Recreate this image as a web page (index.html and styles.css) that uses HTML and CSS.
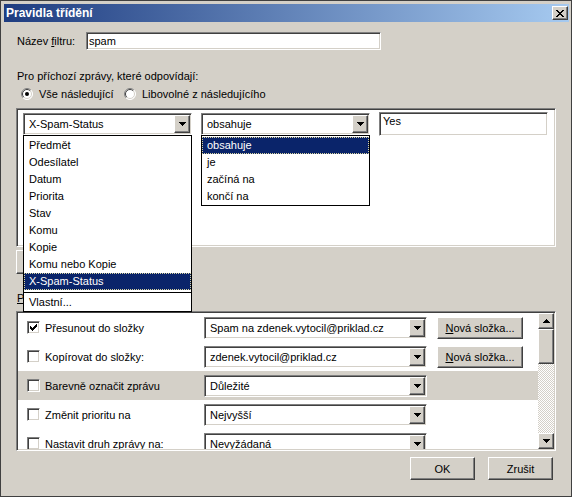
FILE: index.html
```html
<!DOCTYPE html>
<html lang="cs">
  <head>
    <meta charset="UTF-8" />
    <meta name="viewport" content="width=device-width, initial-scale=1.0" />
    <title>Pravidla třídění</title>
    <link rel="stylesheet" href="styles.css">
  </head>
  <body>
    <div class="window">
      <div class="title-bar">
        <span class="title-text">Pravidla třídění</span>
        <div class="close-button raised">
          <svg width="8" height="7" viewBox="0 0 8 7"><path fill="#000" d="M0 0h2v1H0zM6 0h2v1H6zM1 1h2v1H1zM5 1h2v1H5zM2 2h4v1H2zM3 3h2v1H3zM2 4h4v1H2zM1 5h2v1H1zM5 5h2v1H5zM0 6h2v1H0zM6 6h2v1H6z"/></svg>
        </div>
      </div>

      <div class="dialog-body">
        <div class="filter-row">
          <label class="filter-label" for="filter-name">Název <u>f</u>iltru:</label>
          <input type="text" id="filter-name" class="text-field sunken filter-input" value="spam" />
        </div>

        <div class="intro">Pro příchozí zprávy, které odpovídají:</div>

        <div class="radio-row">
          <div class="radio radio-first">
            <svg width="12" height="12" viewBox="0 0 12 12">
              <circle cx="6" cy="6" r="5.5" fill="#fff"/>
              <path d="M2.1 9.9A5.5 5.5 0 0 1 9.9 2.1" fill="none" stroke="#808080"/>
              <path d="M9.9 2.1A5.5 5.5 0 0 1 2.1 9.9" fill="none" stroke="#fff"/>
              <path d="M2.8 9.2A4.5 4.5 0 0 1 9.2 2.8" fill="none" stroke="#404040"/>
              <path d="M9.2 2.8A4.5 4.5 0 0 1 2.8 9.2" fill="none" stroke="#d4d0c8"/>
              <circle cx="6" cy="6" r="2" fill="#000"/>
            </svg>
            <span>Vše následující</span>
          </div>
          <div class="radio">
            <svg width="12" height="12" viewBox="0 0 12 12">
              <circle cx="6" cy="6" r="5.5" fill="#fff"/>
              <path d="M2.1 9.9A5.5 5.5 0 0 1 9.9 2.1" fill="none" stroke="#808080"/>
              <path d="M9.9 2.1A5.5 5.5 0 0 1 2.1 9.9" fill="none" stroke="#fff"/>
              <path d="M2.8 9.2A4.5 4.5 0 0 1 9.2 2.8" fill="none" stroke="#404040"/>
              <path d="M9.2 2.8A4.5 4.5 0 0 1 2.8 9.2" fill="none" stroke="#d4d0c8"/>
            </svg>
            <span>Libovolné z následujícího</span>
          </div>
        </div>

        <div class="conditions sunken">
          <div class="condition-row">
            <div class="field">
              <div class="combo sunken">
                <span class="combo-text">X-Spam-Status</span>
                <span class="combo-button raised">
                  <svg width="7" height="4" viewBox="0 0 7 4"><path fill="#000" d="M0 0h7v1H0zM1 1h5v1H1zM2 2h3v1H2zM3 3h1v1H3z"/></svg>
                </span>
              </div>
              <div class="dropdown">
                <div class="dropdown-item">Předmět</div>
                <div class="dropdown-item">Odesílatel</div>
                <div class="dropdown-item">Datum</div>
                <div class="dropdown-item">Priorita</div>
                <div class="dropdown-item">Stav</div>
                <div class="dropdown-item">Komu</div>
                <div class="dropdown-item">Kopie</div>
                <div class="dropdown-item">Komu nebo Kopie</div>
                <div class="dropdown-item selected">X-Spam-Status</div>
                <div class="dropdown-sep"></div>
                <div class="dropdown-item">Vlastní...</div>
              </div>
            </div>

            <div class="field">
              <div class="combo sunken">
                <span class="combo-text">obsahuje</span>
                <span class="combo-button raised">
                  <svg width="7" height="4" viewBox="0 0 7 4"><path fill="#000" d="M0 0h7v1H0zM1 1h5v1H1zM2 2h3v1H2zM3 3h1v1H3z"/></svg>
                </span>
              </div>
              <div class="dropdown">
                <div class="dropdown-item selected">obsahuje</div>
                <div class="dropdown-item">je</div>
                <div class="dropdown-item">začíná na</div>
                <div class="dropdown-item">končí na</div>
              </div>
            </div>

            <input type="text" class="text-field sunken value-input" value="Yes" />
          </div>
        </div>

        <!-- button hidden under the open list -->
        <div class="add-row">
          <div class="push-button raised"></div>
        </div>

        <div class="actions-label"><u>P</u>rovést tyto akce:</div>

        <div class="actions sunken">
          <div class="action-rows">
            <div class="action-row">
              <span class="checkbox sunken">
                <svg width="7" height="7" viewBox="0 0 7 7"><path fill="#000" d="M6 0h1v1H6zM5 1h2v1H5zM0 2h1v1H0zM4 2h3v1H4zM0 3h2v1H0zM3 3h3v1H3zM0 4h5v1H0zM1 5h3v1H1zM2 6h1v1H2z"/></svg>
              </span>
              <span class="action-label">Přesunout do složky</span>
              <div class="combo sunken action-combo">
                <span class="combo-text">Spam na zdenek.vytocil@priklad.cz</span>
                <span class="combo-button raised">
                  <svg width="7" height="4" viewBox="0 0 7 4"><path fill="#000" d="M0 0h7v1H0zM1 1h5v1H1zM2 2h3v1H2zM3 3h1v1H3z"/></svg>
                </span>
              </div>
              <div class="push-button raised folder-button"><u>N</u>ová složka...</div>
            </div>

            <div class="action-row">
              <span class="checkbox sunken"></span>
              <span class="action-label">Kopírovat do složky:</span>
              <div class="combo sunken action-combo">
                <span class="combo-text">zdenek.vytocil@priklad.cz</span>
                <span class="combo-button raised">
                  <svg width="7" height="4" viewBox="0 0 7 4"><path fill="#000" d="M0 0h7v1H0zM1 1h5v1H1zM2 2h3v1H2zM3 3h1v1H3z"/></svg>
                </span>
              </div>
              <div class="push-button raised folder-button"><u>N</u>ová složka...</div>
            </div>

            <div class="action-row current">
              <span class="checkbox sunken"></span>
              <span class="action-label">Barevně označit zprávu</span>
              <div class="combo sunken action-combo">
                <span class="combo-text">Důležité</span>
                <span class="combo-button raised">
                  <svg width="7" height="4" viewBox="0 0 7 4"><path fill="#000" d="M0 0h7v1H0zM1 1h5v1H1zM2 2h3v1H2zM3 3h1v1H3z"/></svg>
                </span>
              </div>
            </div>

            <div class="action-row">
              <span class="checkbox sunken"></span>
              <span class="action-label">Změnit prioritu na</span>
              <div class="combo sunken action-combo">
                <span class="combo-text">Nejvyšší</span>
                <span class="combo-button raised">
                  <svg width="7" height="4" viewBox="0 0 7 4"><path fill="#000" d="M0 0h7v1H0zM1 1h5v1H1zM2 2h3v1H2zM3 3h1v1H3z"/></svg>
                </span>
              </div>
            </div>

            <div class="action-row">
              <span class="checkbox sunken"></span>
              <span class="action-label">Nastavit druh zprávy na:</span>
              <div class="combo sunken action-combo">
                <span class="combo-text">Nevyžádaná</span>
                <span class="combo-button raised">
                  <svg width="7" height="4" viewBox="0 0 7 4"><path fill="#000" d="M0 0h7v1H0zM1 1h5v1H1zM2 2h3v1H2zM3 3h1v1H3z"/></svg>
                </span>
              </div>
            </div>
          </div>

          <div class="scrollbar">
            <span class="scroll-button raised">
              <svg width="7" height="4" viewBox="0 0 7 4"><path fill="#000" d="M3 0h1v1H3zM2 1h3v1H2zM1 2h5v1H1zM0 3h7v1H0z"/></svg>
            </span>
            <span class="scroll-thumb raised"></span>
            <span class="scroll-track"></span>
            <span class="scroll-button raised">
              <svg width="7" height="4" viewBox="0 0 7 4"><path fill="#000" d="M0 0h7v1H0zM1 1h5v1H1zM2 2h3v1H2zM3 3h1v1H3z"/></svg>
            </span>
          </div>
        </div>

        <div class="dialog-buttons">
          <div class="push-button raised dialog-button">OK</div>
          <div class="push-button raised dialog-button">Zrušit</div>
        </div>
      </div>
    </div>
  </body>
</html>
```

FILE: styles.css
```css
* {
  box-sizing: border-box;
}

body {
  margin: 0;
  background: #fff;
  font-family: "Liberation Sans", Arial, sans-serif;
  font-size: 11px;
  color: #000;
}

u {
  text-decoration: underline;
  text-underline-offset: 1px;
}

/* classic 3d frames */
.raised {
  background: #d4d0c8;
  border: 1px solid;
  border-color: #fff #404040 #404040 #fff;
  box-shadow: inset -1px -1px #808080, inset 1px 1px #d4d0c8;
}

.sunken {
  background: #fff;
  border: 1px solid;
  border-color: #808080 #fff #fff #808080;
  box-shadow: inset 1px 1px #404040, inset -1px -1px #d4d0c8;
}

.window {
  width: 572px;
  height: 497px;
  background: #d4d0c8;
  border: 1px solid #404040;
  padding: 3px 2px 3px 3px;
  display: flex;
  flex-direction: column;
}

.title-bar {
  flex: none;
  height: 18px;
  display: flex;
  align-items: center;
  justify-content: space-between;
  padding: 0 1px 0 2px;
  background: linear-gradient(to right, #1e3c80, #a6caf0);
  color: #fff;
  font-weight: bold;
  font-size: 12px;
}

.close-button {
  width: 16px;
  height: 14px;
  display: flex;
  align-items: center;
  justify-content: center;
}

.dialog-body {
  flex: 1;
  padding: 0 13px 0 12px;
  display: flex;
  flex-direction: column;
}

.filter-row {
  margin-top: 10px;
  display: flex;
  align-items: center;
}

.filter-label {
  width: 69px;
  margin-left: 1px;
}

.text-field {
  font: inherit;
  color: #000;
  outline: none;
  margin: 0;
  padding: 0 2px;
}

.filter-input {
  width: 295px;
  height: 18px;
}

.intro {
  margin: 20px 0 0 1px;
  line-height: 13px;
}

.radio-row {
  margin-top: 4px;
  height: 14px;
  padding-left: 5px;
  display: flex;
  align-items: center;
}

.radio {
  display: flex;
  align-items: center;
  gap: 6px;
}

.radio-first {
  width: 103px;
}

.conditions {
  margin-top: 7px;
  height: 139px;
  padding: 3px 6px;
}

.condition-row {
  display: flex;
  align-items: center;
  gap: 9px;
}

.field {
  position: relative;
  width: 169px;
}

.combo {
  height: 22px;
  padding: 1px;
  display: flex;
  align-items: center;
}

.combo-text {
  flex: 1;
  padding-left: 4px;
  white-space: nowrap;
  overflow: hidden;
}

.combo-button {
  flex: none;
  width: 16px;
  height: 18px;
  display: flex;
  align-items: center;
  justify-content: center;
}

.value-input {
  width: 169px;
  height: 24px;
  padding: 0 3px 6px;
}

.dropdown {
  position: absolute;
  top: 100%;
  left: 0;
  width: 100%;
  z-index: 10;
  background: #fff;
  border: 1px solid #000;
  padding-top: 1px;
}

.dropdown-item {
  height: 17px;
  line-height: 17px;
  padding: 0 5px;
  white-space: nowrap;
}

.dropdown-item.selected {
  background: #0a246a;
  color: #fff;
  outline: 1px dotted #d8d4a0;
  outline-offset: -1px;
}

.dropdown-sep {
  height: 1px;
  margin: 2px 0 1px;
  background: #000;
}

.add-row {
  margin-top: 3px;
  display: flex;
}

.push-button {
  display: flex;
  align-items: center;
  justify-content: center;
  white-space: nowrap;
}

.add-row .push-button {
  width: 75px;
  height: 24px;
}

.actions-label {
  margin: 18px 0 0 1px;
  line-height: 13px;
}

.actions {
  margin-top: 6px;
  height: 140px;
  padding: 1px;
  display: flex;
}

.action-rows {
  flex: 1;
  overflow: hidden;
}

.action-row {
  flex: none;
  height: 29px;
  display: flex;
  align-items: center;
  padding-left: 9px;
}

.action-row.current {
  background: #d4d0c8;
}

.checkbox {
  flex: none;
  width: 13px;
  height: 13px;
  display: flex;
  align-items: center;
  justify-content: center;
}

.action-label {
  width: 164px;
  padding-left: 5px;
  white-space: nowrap;
}

.action-combo {
  width: 223px;
}

.folder-button {
  width: 86px;
  height: 22px;
  margin-left: 10px;
}

.scrollbar {
  flex: none;
  width: 16px;
  display: flex;
  flex-direction: column;
}

.scroll-button {
  height: 16px;
  display: flex;
  align-items: center;
  justify-content: center;
}

.scroll-thumb {
  height: 35px;
}

.scroll-track {
  flex: 1;
  background: repeating-conic-gradient(#fff 0 25%, #d4d0c8 0 50%) 0 0 / 2px 2px;
}

.dialog-buttons {
  margin-top: 6px;
  padding-right: 3px;
  display: flex;
  justify-content: flex-end;
  gap: 13px;
}

.dialog-button {
  width: 65px;
  height: 23px;
}
```
